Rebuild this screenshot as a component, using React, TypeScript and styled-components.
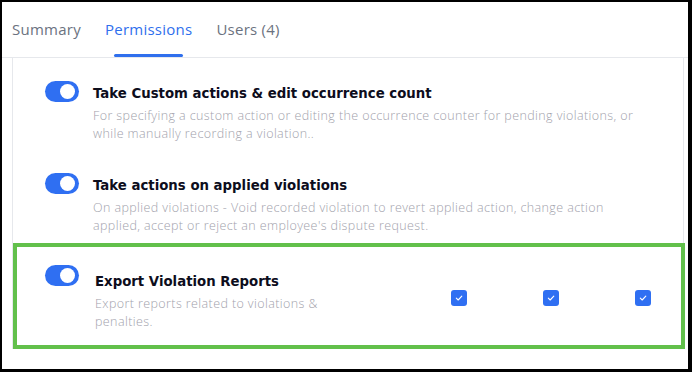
import styled, { createGlobalStyle } from 'styled-components';

const GlobalStyle = createGlobalStyle`
  html, body {
    margin: 0;
    padding: 0;
    background: #000;
  }
  body {
    font-family: "Open Sans", "Noto Sans", sans-serif;
  }
`;

const Frame = styled.div`
  width: 686px;
  height: 367px;
  margin: 2px 0 0 2px;
  background: #fff;
  overflow: hidden;
  display: flex;
  flex-direction: column;
`;

const TabBar = styled.div`
  display: flex;
  gap: 24px;
  height: 55px;
  padding-left: 10px;
  border-bottom: 1px solid #e6e8ec;
`;

const Tab = styled.div<{ $active?: boolean }>`
  position: relative;
  display: flex;
  align-items: center;
  padding-bottom: 2px;
  font-size: 15px;
  font-weight: 500;
  letter-spacing: 0.25px;
  color: ${({ $active }) => ($active ? '#2f6fed' : '#6b7280')};

  &::after {
    content: '';
    display: ${({ $active }) => ($active ? 'block' : 'none')};
    position: absolute;
    left: 9px;
    right: 9px;
    bottom: 0;
    height: 3px;
    border-radius: 2px;
    background: #2f6fed;
  }
`;

const Panel = styled.div`
  margin: 0 4px 0 10px;
  border-left: 1px solid #e6e8ec;
  border-right: 1px solid #e6e8ec;
  display: flex;
  flex-direction: column;
`;

const Row = styled.div<{ $highlight?: boolean }>`
  display: flex;
  align-items: flex-start;
  gap: ${({ $highlight }) => ($highlight ? '16px' : '14px')};
  height: ${({ $highlight }) => ($highlight ? '80px' : '69px')};
  padding: ${({ $highlight }) => ($highlight ? '18px 0 0 28px' : '23px 0 0 32px')};
  border: ${({ $highlight }) => ($highlight ? '4px solid #62c04b' : 'none')};
  margin-right: ${({ $highlight }) => ($highlight ? '-2px' : '0')};
  margin-top: ${({ $highlight }) => ($highlight ? '1px' : '0')};
`;

const Toggle = styled.div`
  flex: none;
  width: 34px;
  height: 21px;
  border-radius: 11px;
  background: #2f6ff2;
  position: relative;

  &::after {
    content: '';
    position: absolute;
    top: 3px;
    right: 4px;
    width: 15px;
    height: 15px;
    border-radius: 50%;
    background: #fff;
  }
`;

const Text = styled.div<{ $narrow?: boolean }>`
  width: ${({ $narrow }) => ($narrow ? '250px' : 'auto')};
  padding-top: ${({ $narrow }) => ($narrow ? '8px' : '4px')};
`;

const Title = styled.div`
  font-family: "DejaVu Sans", "Open Sans", sans-serif;
  font-size: 13.3px;
  font-weight: 700;
  color: #0d0d1c;
  line-height: 18px;
`;

const Desc = styled.div`
  margin-top: 4px;
  font-size: 12.5px;
  font-weight: 300;
  letter-spacing: 0.4px;
  color: #a2a2ac;
  line-height: 18px;
  max-width: 560px;
`;

const Checks = styled.div`
  display: flex;
  margin-left: 90px;
  margin-top: 25px;
  gap: 76px;
`;

const Check = styled.div`
  width: 16px;
  height: 16px;
  border-radius: 3px;
  background: #2f6ff2;
  display: flex;
  align-items: center;
  justify-content: center;
`;

const CheckBox = () => (
  <Check>
    <svg width="10" height="10" viewBox="0 0 10 10">
      <path d="M2.3 5.2 L4.2 7 L7.8 3.2" fill="none" stroke="#fff" strokeWidth="1.1" strokeLinecap="round" strokeLinejoin="round" />
    </svg>
  </Check>
);

export default function App() {
  return (
    <>
      <GlobalStyle />
      <Frame>
        <TabBar>
          <Tab>Summary</Tab>
          <Tab $active>Permissions</Tab>
          <Tab>Users (4)</Tab>
        </TabBar>
        <Panel>
          <Row>
            <Toggle />
            <Text>
              <Title>Take Custom actions &amp; edit occurrence count</Title>
              <Desc>
                For specifying a custom action or editing the occurrence counter for pending violations, or while
                manually recording a violation..
              </Desc>
            </Text>
          </Row>
          <Row>
            <Toggle />
            <Text>
              <Title>Take actions on applied violations</Title>
              <Desc>
                On applied violations - Void recorded violation to revert applied action, change action applied,
                accept or reject an employee's dispute request.
              </Desc>
            </Text>
          </Row>
          <Row $highlight>
            <Toggle />
            <Text $narrow>
              <Title>Export Violation Reports</Title>
              <Desc>Export reports related to violations &amp; penalties.</Desc>
            </Text>
            <Checks>
              <CheckBox />
              <CheckBox />
              <CheckBox />
            </Checks>
          </Row>
        </Panel>
      </Frame>
    </>
  );
}
